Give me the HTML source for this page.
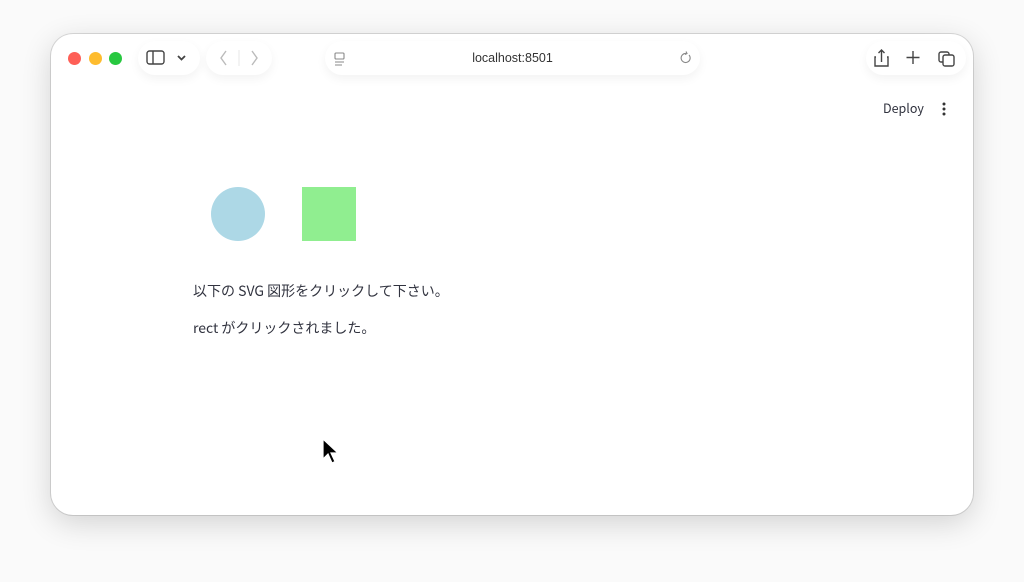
<!DOCTYPE html>
<html><head><meta charset="utf-8"><style>
body{margin:0;width:1024px;height:582px;background:#fafafa;position:relative;overflow:hidden;font-family:"Liberation Sans","Noto Sans CJK JP",sans-serif}
.win{position:absolute;left:51px;top:34px;width:922px;height:481px;background:#fff;border-radius:22px;box-shadow:0 8px 30px rgba(0,0,0,.16),0 0 0 1px rgba(0,0,0,.12);overflow:hidden}
.dot{position:absolute;top:52px;width:13px;height:13px;border-radius:50%}
.pill{position:absolute;background:#fff;border-radius:18px;box-shadow:0 4px 10px rgba(0,0,0,.05)}
.t{position:absolute;font-size:14px;color:#31333f;font-family:"Noto Sans CJK JP",sans-serif;line-height:20px}
</style></head><body>
<div class="win"></div>
<div class="dot" style="left:68px;background:#fe5f57"></div>
<div class="dot" style="left:89px;background:#febc2e"></div>
<div class="dot" style="left:109px;background:#28c840"></div>
<div class="pill" style="left:138px;top:41px;width:62px;height:34px"></div>
<div class="pill" style="left:206px;top:41px;width:66px;height:34px"></div>
<div class="pill" style="left:325px;top:41px;width:375px;height:34px"></div>
<div class="pill" style="left:866px;top:41px;width:100px;height:34px"></div>
<svg style="position:absolute;left:0;top:0" width="1024" height="120" fill="none" stroke="#444" stroke-width="1.4">
<rect x="147" y="51" width="17" height="13" rx="2.5"/><line x1="153" y1="51" x2="153" y2="64"/>
<path d="M178 56l3.5 3.5 3.5-3.5" stroke-width="1.8"/>
<path d="M226 51l-5 7 5 7" stroke="#bbb"/><path d="M252 51l5 7-5 7" stroke="#bbb"/>
<line x1="239" y1="50" x2="239" y2="66" stroke="#eee"/>
<rect x="335" y="53" width="9" height="6" rx="1" stroke="#888" stroke-width="1.1"/><path d="M335 62h9M335 65h7" stroke="#888" stroke-width="1.1"/>
<path d="M689 55a4.5 4.5 0 1 1-3-1.5M686 51.5l1 2-2 1" stroke="#888" stroke-width="1.1"/>
<path d="M876 57h-1v9h13v-9h-1M881.5 62v-12M878.5 53l3-3 3 3"/>
<path d="M913 51v13M906.5 57.5h13"/>
<rect x="939" y="52" width="10" height="10" rx="2"/><rect x="943" y="55" width="11" height="11" rx="2" fill="#fff"/>
</svg>
<div style="position:absolute;left:325px;width:375px;top:51px;text-align:center;font-size:12.5px;color:#333">localhost:8501</div>
<div class="t" style="left:883px;top:98px;font-size:12.5px">Deploy</div>
<svg style="position:absolute;left:940px;top:101px" width="8" height="16"><circle cx="4" cy="3" r="1.5" fill="#333"/><circle cx="4" cy="8" r="1.5" fill="#333"/><circle cx="4" cy="13" r="1.5" fill="#333"/></svg>
<div style="position:absolute;left:211px;top:187px;width:54px;height:54px;border-radius:50%;background:#add8e6"></div>
<div style="position:absolute;left:302px;top:187px;width:54px;height:54px;background:#90ee90"></div>
<div class="t" style="left:193px;top:281px">以下の SVG 図形をクリックして下さい。</div>
<div class="t" style="left:193px;top:318px">rect がクリックされました。</div>
<svg style="position:absolute;left:322px;top:438px" width="18" height="28"><path d="M1 1v20l5-5 4 9 3-1.5-4-8.5h7z" fill="#000" stroke="#fff" stroke-width="1.2"/></svg>
</body></html>
